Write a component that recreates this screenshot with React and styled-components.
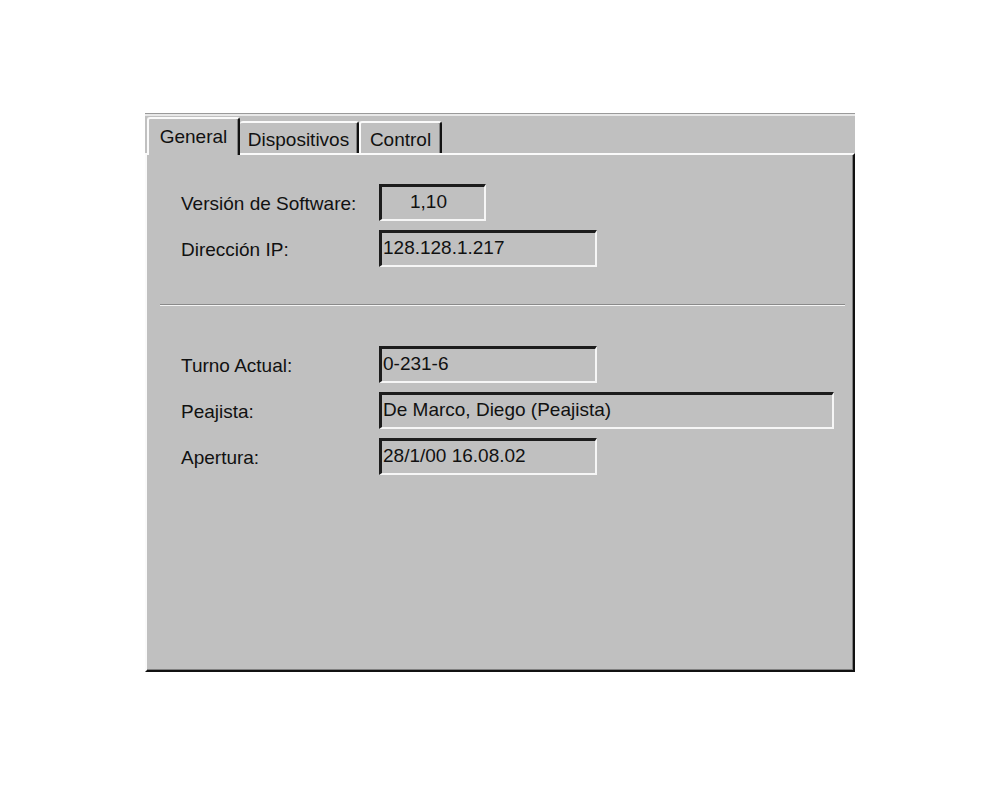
import styled, { createGlobalStyle } from "styled-components";

const GlobalStyle = createGlobalStyle`
  html, body {
    margin: 0;
    padding: 0;
    background: #ffffff;
  }
  body {
    font-family: "Liberation Sans", Arial, sans-serif;
    font-size: 19px;
    color: #111;
  }
`;

const Window = styled.div`
  margin: 113px 0 0 145px;
  width: 710px;
  background: #c0c0c0;
  border-top: 1px solid #9a9a9a;
  box-shadow: inset 0 2px 0 #e8e8e8;
  padding-top: 3px;
`;

const TabStrip = styled.div`
  display: flex;
  align-items: flex-end;
  height: 36px;
  padding-left: 2px;
  position: relative;
  z-index: 2;
`;

const Tab = styled.div`
  box-sizing: border-box;
  width: ${(p) => p.$width}px;
  height: ${(p) => (p.$active ? 38 : 32)}px;
  margin-bottom: ${(p) => (p.$active ? -2 : 0)}px;
  display: flex;
  align-items: ${(p) => (p.$active ? "flex-start" : "center")};
  padding-top: ${(p) => (p.$active ? 7 : 3)}px;
  justify-content: center;
  background: #c0c0c0;
  border-top: 2px solid #fafafa;
  border-left: ${(p) => (p.$noLeft ? 0 : 2)}px solid #fafafa;
  border-right: 2px solid #111;
  border-radius: 3px 3px 0 0;
  box-shadow: inset -1px 0 0 #808080;
  white-space: nowrap;
`;

const Panel = styled.div`
  box-sizing: border-box;
  height: 519px;
  border-top: 2px solid #fafafa;
  border-left: 2px solid #fafafa;
  border-right: 2px solid #111;
  border-bottom: 2px solid #111;
  box-shadow: inset -1px -1px 0 #808080;
  padding: 29px 0 0 0;
`;

const FieldGrid = styled.div`
  display: grid;
  grid-template-columns: 198px auto;
  row-gap: 9px;
  align-items: center;
  padding-left: 34px;
`;

const Label = styled.div`
  white-space: nowrap;
  padding-top: 2px;
`;

const Field = styled.div`
  box-sizing: border-box;
  width: ${(p) => p.$width}px;
  height: 37px;
  display: flex;
  align-items: center;
  justify-content: ${(p) => (p.$center ? "center" : "flex-start")};
  padding: 0 ${(p) => (p.$center ? 10 : 0)}px 2px 1px;
  border-top: 3px solid #1c1c1c;
  border-left: 3px solid #1c1c1c;
  border-bottom: 2px solid #f6f6f6;
  border-right: 2px solid #f6f6f6;
  background: #c0c0c0;
  white-space: nowrap;
`;

const Separator = styled.div`
  margin: 37px 8px 40px 13px;
  height: 1px;
  background: #8a8a8a;
  border-bottom: 1px solid #f4f4f4;
`;

export default function App() {
  return (
    <>
      <GlobalStyle />
      <Window>
        <TabStrip>
          <Tab $active $width={93}>General</Tab>
          <Tab $width={119} $noLeft>Dispositivos</Tab>
          <Tab $width={83}>Control</Tab>
        </TabStrip>
        <Panel>
          <FieldGrid>
            <Label>Versión de Software:</Label>
            <Field $width={107} $center>1,10</Field>
            <Label>Dirección IP:</Label>
            <Field $width={218}>128.128.1.217</Field>
          </FieldGrid>
          <Separator />
          <FieldGrid>
            <Label>Turno Actual:</Label>
            <Field $width={218}>0-231-6</Field>
            <Label>Peajista:</Label>
            <Field $width={455}>De Marco, Diego (Peajista)</Field>
            <Label>Apertura:</Label>
            <Field $width={218}>28/1/00 16.08.02</Field>
          </FieldGrid>
        </Panel>
      </Window>
    </>
  );
}
